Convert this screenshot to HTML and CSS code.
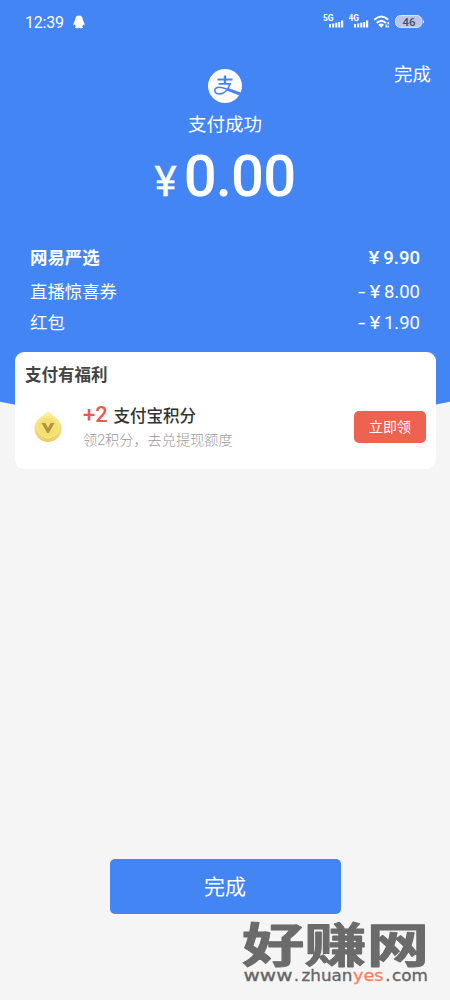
FILE: index.html
```
<!DOCTYPE html>
<html lang="zh-CN">
<head>
<meta charset="utf-8">
<title>支付成功</title>
<link rel="stylesheet" href="styles.css">
</head>
<body>
<div class="page">
  <header class="hero">
    <div class="status">
      <span class="time">12:39</span>
      <svg class="qq" width="12" height="14" viewBox="0 0 12 14" fill="#fff"><path d="M6 .5C3.700.500 2.300 2 2.300 4.200L1.300 7Q-.1 9.500.6 10.300L1.900 9.500Q2 10.700 2.800 11.500L1.900 12.800Q3.600 13.700 6 12.700Q8.400 13.700 10.100 12.800L9.200 11.500Q10 10.700 10.100 9.500L11.400 10.300Q12.100 9.500 10.700 7L9.700 4.200C9.700 2 8.300.5 6 .5Z"/></svg>
      <svg class="signals" width="102" height="16" viewBox="0 0 102 16" fill="#fff">
        <text class="net" x="0" y="7" textLength="10.500" lengthAdjust="spacingAndGlyphs">5G</text>
        <path d="M6 10h2v3.500h-2zM9.200 9.500h2v4h-2zM12.300 8.700h2v4.800h-2zM15.200 8h2v5.500h-2zM18 6.500h2.200v7H18z"/>
        <text class="net" x="25.500" y="7" textLength="10.500" lengthAdjust="spacingAndGlyphs">4G</text>
        <path d="M31 10h2v3.500h-2zM34.200 9.500h2v4h-2zM37.300 8.700h2v4.800h-2zM40.200 8h2v5.500h-2zM43 6.500h2.200v7H43z"/>
        <g fill="none" stroke="#fff" stroke-width="1.900"><path d="M51.300 5.800Q58.300-.7 65.300 5.800M53.800 9Q58.300 4.600 62.800 9"/></g>
        <path d="M55.300 10.800Q58.300 8.400 61 10.800L58.300 13.700ZM62.600 10.500h1.200v3h-1.200zM64.500 8h1.400v2.300h-1.400zM64.500 11.500h1.400v2h-1.400z"/>
        <rect x="72.500" y="1.500" width="26.500" height="12" rx="5" fill="#b9c6e6" stroke="#dce6fb"/>
        <path d="M100 5.500q1.800 2 0 4z"/>
        <text class="level" x="79.500" y="11.700" textLength="13" lengthAdjust="spacingAndGlyphs">46</text>
      </svg>
    </div>
    <div class="top-action">完成</div>
    <svg class="logo" width="36" height="36" viewBox="0 0 36 36">
      <circle cx="18" cy="18" r="17" fill="#fff"/>
      <g fill="none" stroke="#4485f5" stroke-width="1.800">
        <path d="M10.500 11.500H25.500M11.500 15.800H24"/>
        <path d="M18 7.500V16" stroke-width="2.400"/>
        <path d="M23.300 15.500C21.500 20.500 17.500 26 12.200 26C6.300 26 6.300 19.200 12.300 19.200C16 19.200 19 21 22 22.200" stroke-width="1.600"/>
        <path d="M20 21.200L34.500 26.500" stroke-width="3"/>
      </g>
    </svg>
    <div class="result">支付成功</div>
    <div class="total"><span class="yen">¥</span><span class="sum">0.00</span></div>
    <div class="lines">
      <div class="line line-main"><span class="label">网易严选</span><span class="amount"><i>¥</i>9.90</span></div>
      <div class="line line-coupon"><span class="label">直播惊喜券</span><span class="amount"><b>-</b><i>¥</i>8.00</span></div>
      <div class="line line-packet"><span class="label">红包</span><span class="amount"><b>-</b><i>¥</i>1.90</span></div>
    </div>
  </header>
  <section class="card">
    <div class="card-title">支付有福利</div>
    <div class="reward">
      <svg class="coin" width="40" height="40" viewBox="0 0 40 40">
        <defs><linearGradient id="gold" x2="0" y2="1"><stop offset="0" stop-color="#fbf1a5"/><stop offset="1" stop-color="#edcc61"/></linearGradient></defs>
        <circle cx="20" cy="20" r="19" fill="#fdfdfd"/>
        <path d="M20 4.500Q21.300 4.500 23 6.500L29.500 12A13.500 13.500 0 1 1 10.500 12L17 6.500Q18.700 4.500 20 4.500Z" fill="url(#gold)"/>
        <circle cx="20" cy="20.500" r="10.500" fill="#f4df73" stroke="#f9ea91"/>
        <path d="M13.500 16H17.500L20 21L22.500 16H26.500L20.800 26H19.200Z" fill="#b49440"/>
      </svg>
      <div class="reward-text">
        <div class="points"><span class="plus">+2</span><span>支付宝积分</span></div>
        <div class="hint">领2积分，去兑提现额度</div>
      </div>
      <div class="claim">立即领</div>
    </div>
  </section>
  <div class="done">完成</div>
  <svg class="watermark" width="200" height="70" viewBox="0 0 200 70">
    <g transform="translate(1 42) scale(1 .77)"><text class="mark" x="0" y="0" textLength="187" lengthAdjust="spacingAndGlyphs">好赚网</text></g>
    <g class="site">
      <text x="2.500" y="61" textLength="49" lengthAdjust="spacingAndGlyphs">www</text>
      <text x="53" y="61">.</text>
      <text x="60.500" y="61" textLength="51" lengthAdjust="spacingAndGlyphs">zhuan</text>
      <text class="accent" x="112" y="61" textLength="30.500" lengthAdjust="spacingAndGlyphs">yes</text>
      <text x="144.500" y="61">.</text>
      <text x="151" y="61" textLength="36" lengthAdjust="spacingAndGlyphs">com</text>
    </g>
  </svg>
</div>
</body>
</html>
```
FILE: styles.css
```
body { margin: 0; }
.page {
  position: relative;
  width: 450px;
  height: 1000px;
  overflow: hidden;
  background: #f5f5f5;
  font-family: Roboto, "Noto Sans CJK SC", sans-serif;
  display: flex;
  flex-direction: column;
}
.hero {
  height: 420px;
  box-sizing: border-box;
  background: #4485f5;
  clip-path: ellipse(700px 420px at 225px 4px);
  color: #fff;
  display: flex;
  flex-direction: column;
  align-items: center;
}
.status {
  align-self: stretch;
  height: 44px;
  padding: 0 25px;
  display: flex;
  align-items: center;
}
.time { font-size: 16px; letter-spacing: -0.2px; }
.qq { margin-left: 9px; }
.signals { margin-left: auto; }
.net { font: 700 8.500px Roboto, sans-serif; }
.level { font: 500 11.5px Roboto, sans-serif; fill: #47506a; }
.top-action {
  align-self: flex-end;
  margin-right: 19px;
  height: 24px;
  margin-top: 19px;
  margin-bottom: -19px;
  line-height: 24px;
  font-size: 18.500px;
}
.result { height: 28px; margin-top: 7px; line-height: 28px; font-size: 18.500px; }
.total {
  height: 70px;
  margin-top: 2px;
  display: flex;
  align-items: baseline;
  justify-content: center;
  font-weight: 500;
  line-height: 70px;
}
.yen { font-size: 42px; font-weight: 400; margin-right: 7px; -webkit-text-stroke: 0.4px #fff; }
.sum { font-size: 58px; letter-spacing: -0.8px; }
.lines { align-self: stretch; margin-top: 30px; padding: 0 30px; }
.line { display: flex; align-items: center; justify-content: space-between; font-size: 17.400px; }
.label { padding-bottom: 4px; }
.line-main { height: 34px; font-weight: 500; }
.line-main .label { font-weight: 700; }
.line-coupon { height: 34px; }
.line-packet { height: 28px; }
.amount { font-size: 18.500px; display: flex; align-items: center; }
.amount i { font-style: normal; margin-right: 4px; transform: scaleX(1.12); }
.amount b { font-weight: 400; margin-right: 6px; transform: scaleX(1.4); }
.card {
  position: relative;
  height: 117px;
  box-sizing: border-box;
  margin: -68px 14px 0 15px;
  padding: 11px 10px 10px;
  border-radius: 9px;
  background: #fff;
}
.card-title { height: 25px; line-height: 25px; font-size: 16.500px; font-weight: 700; color: #444; }
.reward { display: flex; align-items: center; height: 60px; margin-top: 9px; }
.coin { margin-left: 3px; }
.reward-text { margin-left: 15px; }
.points { display: flex; align-items: center; height: 25px; font-size: 16.500px; font-weight: 500; color: #333; }
.plus { color: #e65a50; font-size: 22px; font-weight: 500; width: 30.500px; }
.hint { height: 25px; line-height: 27px; font-size: 14.200px; color: #999; white-space: nowrap; font-weight: 300; }
.claim {
  width: 72px;
  height: 32px;
  margin-left: auto;
  border-radius: 5px;
  background: #ee6250;
  color: #fff;
  font-size: 14px;
  line-height: 33px;
  text-align: center;
}
.done {
  align-self: center;
  width: 231px;
  height: 55px;
  margin-top: 390px;
  border-radius: 5px;
  background: #4485f5;
  color: #fff;
  font-size: 21px;
  line-height: 57px;
  text-align: center;
}
.watermark { position: absolute; left: 241px; top: 920px; overflow: visible; }
.mark { font: 700 60px "Noto Sans CJK SC", sans-serif; fill: #6b6b6b; stroke: #6b6b6b; stroke-width: 1.2; stroke-linejoin: round; }
.site { font: 400 15px "DejaVu Sans", sans-serif; fill: #666; stroke: #666; stroke-width: .3; }
.accent { fill: #ff8060; stroke: #ff8060; }
```
